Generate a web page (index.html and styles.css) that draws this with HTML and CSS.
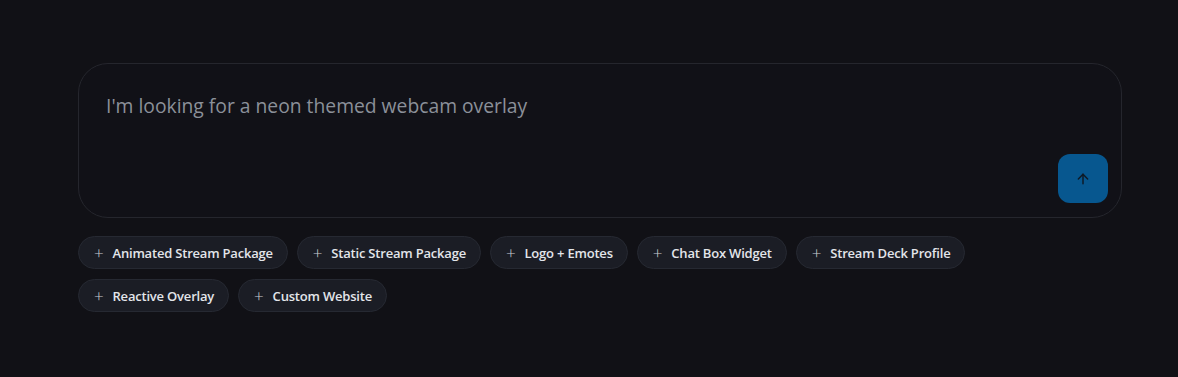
FILE: index.html
```html
<!DOCTYPE html>
<html lang="en">
<head>
  <meta charset="UTF-8" />
  <meta name="viewport" content="width=device-width, initial-scale=1" />
  <title>Overlay Request</title>
  <link rel="stylesheet" href="styles.css">
</head>
<body>
  <div class="composer">
    <div class="prompt-box">
      <div class="prompt-text">I'm looking for a neon themed webcam overlay</div>
      <button class="send-button" aria-label="Send">
        <svg width="16" height="16" viewBox="0 0 24 24" fill="none" stroke="currentColor" stroke-width="2.2" stroke-linecap="round" stroke-linejoin="round">
          <path d="M12 19V5"/>
          <path d="M5 12l7-7 7 7"/>
        </svg>
      </button>
    </div>

    <div class="chips">
      <button class="chip"><span class="plus">+</span>Animated Stream Package</button>
      <button class="chip"><span class="plus">+</span>Static Stream Package</button>
      <button class="chip"><span class="plus">+</span>Logo + Emotes</button>
      <button class="chip"><span class="plus">+</span>Chat Box Widget</button>
      <button class="chip"><span class="plus">+</span>Stream Deck Profile</button>
      <button class="chip"><span class="plus">+</span>Reactive Overlay</button>
      <button class="chip"><span class="plus">+</span>Custom Website</button>
    </div>
  </div>
</body>
</html>
```

FILE: styles.css
```css
* {
  box-sizing: border-box;
}
body {
  font-family: 'Segoe UI', 'Open Sans', sans-serif;
  background-color: #111116;
  margin: 0;
  padding: 63px 56px 0 78px;
}
.composer {
  width: 1044px;
}
.prompt-box {
  height: 155px;
  border: 1px solid #25262d;
  border-radius: 30px;
  background: #111117;
  padding: 0 13px 14px 27px;
  display: flex;
  flex-direction: column;
  justify-content: space-between;
}
.prompt-text {
  margin-top: 28px;
  font-size: 19.3px;
  color: #8b9099;
}
.send-button {
  align-self: flex-end;
  width: 50px;
  height: 49px;
  border: none;
  border-radius: 12px;
  background-color: #07578f;
  color: #0e1a26;
  display: flex;
  align-items: center;
  justify-content: center;
  cursor: pointer;
}
.chips {
  display: flex;
  flex-wrap: wrap;
  gap: 10px 9px;
  margin-top: 18px;
}
.chip {
  height: 33px;
  padding: 0 14px 0 15px;
  border: 1px solid #262932;
  border-radius: 17px;
  background-color: #1b1d25;
  color: #e3e5ea;
  font-family: inherit;
  font-size: 13px;
  font-weight: 600;
  letter-spacing: -0.2px;
  display: flex;
  align-items: center;
  cursor: pointer;
}
.plus {
  font-weight: 300;
  font-size: 17px;
  margin-right: 9px;
  color: #c9ccd3;
}
```
